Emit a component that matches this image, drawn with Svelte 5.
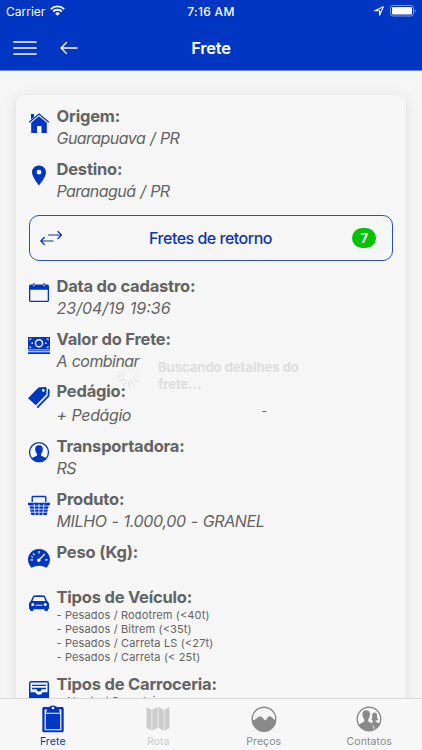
<script lang="ts">
  type Detail = {
    icon: string;
    label: string;
    value?: string;
    list?: string[];
    kind?: string;
  };

  const route: Detail[] = [
    { icon: "home", label: "Origem:", value: "Guarapuava / PR" },
    { icon: "pin", label: "Destino:", value: "Paranaguá / PR" },
  ];

  const details: Detail[] = [
    { icon: "calendar", label: "Data do cadastro:", value: "23/04/19 19:36", kind: "date" },
    { icon: "cash", label: "Valor do Frete:", value: "A combinar" },
    { icon: "tags", label: "Pedágio:", value: "+ Pedágio", kind: "toll" },
    { icon: "person", label: "Transportadora:", value: "RS" },
    { icon: "basket", label: "Produto:", value: "MILHO - 1.000,00 - GRANEL", kind: "product" },
    { icon: "gauge", label: "Peso (Kg):", kind: "empty" },
    {
      icon: "car",
      label: "Tipos de Veículo:",
      list: [
        "- Pesados / Rodotrem (<40t)",
        "- Pesados / Bitrem (<35t)",
        "- Pesados / Carreta LS (<27t)",
        "- Pesados / Carreta (< 25t)",
      ],
    },
    { icon: "tray", label: "Tipos de Carroceria:", list: ["- Aberta / Graneleiro"], kind: "body-types" },
  ];

  const tabs = [
    { icon: "clipboard", label: "Frete", state: "active" },
    { icon: "map", label: "Rota", state: "disabled" },
    { icon: "chart", label: "Preços", state: "" },
    { icon: "contacts", label: "Contatos", state: "" },
  ];

  const spokes = Array.from({ length: 12 }, (_, i) => i * 30);
</script>

{#snippet detailIcon(name: string)}
  <svg class="icon" viewBox="0 0 22 22" fill="currentColor">
    {#if name === "home"}
      <path d="M3 3h3v3L3 8.500z" />
      <path d="M1.200 11.200 11 3l9.800 8.200" fill="none" stroke="currentColor" stroke-width="1.300" />
      <path d="M11 5.200 18.800 11.800V22h-5.300v-7H9v7H3.200V11.800z" />
    {:else if name === "pin"}
      <path fill-rule="evenodd" d="M11 1.500C7 1.500 4 4.500 4 8.300 4 13.300 11 21.500 11 21.500s7-8.200 7-13.200c0-3.800-3-6.800-7-6.800zm0 4.300a2.400 2.400 0 1 1 0 4.800 2.400 2.400 0 0 1 0-4.800z" />
    {:else if name === "calendar"}
      <path fill-rule="evenodd" d="M2.500 3.500H5v1.200c0 .8 1.600.8 1.600 0V3.500h8.800v1.200c0 .8 1.600.8 1.600 0V3.500h2.500A1.500 1.500 0 0 1 21 5v14.500a1.500 1.500 0 0 1-1.500 1.500h-17A1.500 1.500 0 0 1 1 19.500V5a1.500 1.500 0 0 1 1.500-1.500zm-.2 5.300v10.900h17.400V8.800z" />
      <path d="M5.200 2h1.200v2.500H5.200zM15.600 2h1.200v2.500h-1.200z" />
    {:else if name === "cash"}
      <path d="M0 3h22v12.500H0z" />
      <circle cx="11" cy="9.200" r="3.500" fill="none" stroke="#f6f6f6" stroke-width="1.400" />
      <path d="M1.500 4.500h2.300L1.500 6.800zM20.500 4.500h-2.300l2.300 2.300zM1.500 14h2.300l-2.300-2.300zM20.500 14h-2.300l2.300-2.300zM3.500 8.500H5V10H3.500zM17 8.500h1.500V10H17z" fill="#f6f6f6" />
      <path d="M0 16.300h22v1H0zM0 18.300h22v1.700H0z" />
    {:else if name === "tags"}
      <path fill-rule="evenodd" d="M0 12.300 10.500 1.500l6.700-.5c.8 0 1.500.7 1.500 1.500l-.4 6L7.800 19.300zM15.300 3a1.400 1.400 0 1 0 0 2.800 1.400 1.400 0 0 0 0-2.800z" />
      <path d="M20 2.800c1 .4 1.700 1 1.700 2l-.4 5.700L9.800 22.300l-1.200-1.200L19.600 9.500z" />
    {:else if name === "person"}
      <circle cx="11" cy="11.200" r="9.500" fill="none" stroke="currentColor" stroke-width="1.300" />
      <path d="M11 4.200c-2.800 0-4 1.900-3.800 4.500.2 1.900.9 3 1.700 4v2L3.700 17c4 5 10.600 5 14.600 0l-5.200-2.300v-2c.8-1 1.500-2.100 1.700-4 .2-2.600-1-4.500-3.800-4.500z" />
    {:else if name === "basket"}
      <path d="M4.200 8V3.300c0-.6.300-.8.800-.8h12c.5 0 .8.200.8.800V8" fill="none" stroke="currentColor" stroke-width="1.400" />
      <path d="M0 8.700h22v2.300h-1.200L18.700 21H3.300L1.200 11H0z" />
      <path d="M1 12h20M2 15.200h18M3 18.200h16M6 9.800l1.200 11.500M11 9.800v11.500M16 9.800l-1.200 11.500" stroke="#f6f6f6" stroke-width=".8" />
    {:else if name === "gauge"}
      <path d="M11 2C4.900 2 0 6.700 0 12.500c0 3 1.200 5.800 3.500 8.300 4.500-2.900 10.500-2.900 15 0 2.300-2.500 3.500-5.300 3.500-8.300C22 6.700 17.100 2 11 2z" />
      <path d="M11 4v2.400M5 6.500l1.600 1.600M2.500 12.800h2.600M17 12.800h2.600M3.300 9.500l1.700.7M11 13l5.800-6" stroke="#f6f6f6" stroke-width="1.200" />
      <circle cx="10.800" cy="13.200" r="1.700" fill="#f6f6f6" />
    {:else if name === "car"}
      <path fill-rule="evenodd" d="M5.200 3.800C6 3 16 3 16.800 3.800l2.400 5.200 1.800 2.300v5.600h-1v1.400c0 1-3.500 1-3.500 0v-1h-11v1c0 1-3.500 1-3.500 0v-1.400H1v-5.600L2.800 9zm1 1.100L4.500 9h13l-1.700-4.100zM4.800 10.900a1.500 1.500 0 1 0 0 3 1.500 1.500 0 0 0 0-3zm12.400 0a1.500 1.500 0 1 0 0 3 1.500 1.500 0 0 0 0-3zM7.500 12.700v1h7v-1z" />
    {:else if name === "tray"}
      <path fill-rule="evenodd" d="M3 2h16a2 2 0 0 1 2 2v18H1V4a2 2 0 0 1 2-2zm-.5 1.500v9.800h5c.3 1.500 1.500 2.500 3.500 2.500s3.200-1 3.500-2.500h5V3.500z" />
      <path d="M4 5.800h14v1.200H4zM4 8.800h14v1.400h-4.600c0 3-4.800 3-4.800 0H4z" />
    {/if}
  </svg>
{/snippet}

{#snippet tabIcon(name: string)}
  <svg class="tab-icon" viewBox="0 0 28 28" fill="currentColor">
    {#if name === "clipboard"}
      <path fill-rule="evenodd" d="M4.800 2H10c.7-.2 1.200-1.600 4-1.600S17.300 1.800 18 2h5.200c.9 0 1.500.6 1.500 1.500v22.300c0 .9-.6 1.500-1.500 1.500H4.800c-.9 0-1.500-.6-1.500-1.500V3.500C3.300 2.600 3.900 2 4.800 2zm.8 2.500v20.800h16.800V4.500h-2.600L21 7.700H7l1.200-3.200zM14 1.700a1.300 1.300 0 1 0 0 2.600 1.300 1.300 0 0 0 0-2.600z" />
      <path d="M6.800 8.800h14.400v15.400H6.800z" />
    {:else if name === "map"}
      <path d="m2.500 2 5 2.700v21.100l-5-3zM8.300 4.700 13.600 2v20.800l-5.300 3zM14.400 2l5.300 2.700v21.100l-5.300-3zM20.500 4.700l5-2.700v20.800l-5 3z" />
    {:else if name === "chart"}
      <circle cx="14" cy="14" r="11.800" fill="none" stroke="currentColor" stroke-width="1.400" />
      <path d="M2 15c2.500 0 3.500-.5 5.200-2.200C8.700 11.200 10 10.800 11.800 12c1.500 1 2.200 3.300 3.500 3.300s2-3.500 4.200-4c2.400-.4 3.500 3.700 6.500 3.700A12 12 0 0 1 2 15z" />
    {:else}
      <circle cx="14" cy="14" r="11.800" fill="none" stroke="currentColor" stroke-width="1.400" />
      <path d="M19.200 7.500c2.300 0 3.100 1.700 2.900 3.500-.1 1.700.3 2.700 1.200 3.700-1 .7-2.200.9-2.800.9v1.200l4 1.600c-1 3.200-3 5.200-5 6.200-.3-3-.8-4.800-3.600-5.800l1.800-1.900v-1.300c-.6-.2-1-.4-1.300-.9 1-1.700.9-3.300.8-5 .3-1.400 1-2 2-2z" />
      <path d="M11.200 5.300c2.900 0 4 2 3.700 4.600-.1 1.800-.8 3.300-1.700 4.300v2.300c2.800 1.700 5.300 1.900 5.300 8.500-5 2.200-12 .6-14.500-5.500l5.200-3v-2.300c-.9-1-1.600-2.500-1.700-4.300-.3-2.600.8-4.600 3.700-4.600z" />
    {/if}
  </svg>
{/snippet}

{#snippet detailRow(row: Detail)}
  <div class="row {row.kind ?? ''}">
    {@render detailIcon(row.icon)}
    <div class="row-text">
      <h2>{row.label}</h2>
      {#if row.value}
        <p class="value">{row.value}</p>
      {/if}
      {#if row.list}
        <ul>
          {#each row.list as item}
            <li>{item}</li>
          {/each}
        </ul>
      {/if}
    </div>
    {#if row.kind === "toll"}
      <span class="toll-note">-</span>
    {/if}
  </div>
{/snippet}

<div class="screen">
  <header>
    <div class="status">
      <div class="carrier">
        <span>Carrier</span>
        <svg class="wifi" viewBox="0 0 15 11" fill="none" stroke="#fff" stroke-width="1.900">
          <path d="M.9 4.100a9.400 9.400 0 0 1 13.200 0M3.200 6.500a6.100 6.100 0 0 1 8.600 0" />
          <path d="M7.500 10.800 5.200 8.400a3.300 3.300 0 0 1 4.600 0z" fill="#fff" stroke="none" />
        </svg>
      </div>
      <span class="clock">7:16 AM</span>
      <div class="indicators">
        <svg class="location" viewBox="0 0 10 10" fill="none" stroke="#fff" stroke-width="1.100">
          <path d="M9.300.7 5.600 9.200V4.700H.7z" stroke-linejoin="round" />
        </svg>
        <svg class="battery" viewBox="0 0 26 12">
          <rect x=".5" y=".5" width="23" height="10.500" rx="2.600" fill="none" stroke="#7f9be2" />
          <rect x="2" y="2" width="20" height="7.500" rx="1.300" fill="#fff" />
          <path d="M24.700 4v3.800c1.200-.5 1.200-3.300 0-3.800z" fill="#7f9be2" />
        </svg>
      </div>
    </div>
    <div class="navbar">
      <div class="actions">
        <svg class="menu" viewBox="0 0 24 16" stroke="#fff" stroke-width="1.700" stroke-linecap="round">
          <path d="M1 2h22M1 8h22M1 14h22" />
        </svg>
        <svg class="back" viewBox="0 0 18 14" fill="none" stroke="#fff" stroke-width="1.400" stroke-linecap="round" stroke-linejoin="round">
          <path d="M17 7H1M6.500 1.500 1 7l5.500 5.500" />
        </svg>
      </div>
      <h1>Frete</h1>
    </div>
  </header>

  <main>
    <section class="card">
      {#each route as row}
        {@render detailRow(row)}
      {/each}

      <button type="button" class="return-button">
        <svg viewBox="0 0 22 16" fill="none" stroke="currentColor" stroke-width="1.200" stroke-linecap="round" stroke-linejoin="round">
          <path d="M8.500 5h13M18 1.500 21.500 5 18 8.500M13 11H.8M4.300 7.500.8 11l3.500 3.500" />
        </svg>
        <span>Fretes de retorno</span>
        <strong>7</strong>
      </button>

      {#each details as row}
        {@render detailRow(row)}
      {/each}
    </section>
  </main>

  <nav>
    {#each tabs as tab}
      <div class="tab {tab.state}">
        {@render tabIcon(tab.icon)}
        <span>{tab.label}</span>
      </div>
    {/each}
  </nav>

  <div class="loading">
    <svg viewBox="0 0 28 28">
      {#each spokes as angle, i}
        <path
          d="M14 3v5.500"
          transform="rotate({angle} 14 14)"
          stroke="#dedede"
          stroke-width="1.500"
          stroke-linecap="round"
          opacity={i > 3 && i < 10 ? 0.7 : 0.25}
        />
      {/each}
    </svg>
    <p>Buscando detalhes do<br />frete...</p>
  </div>
</div>

<style>
  :global(body) {
    margin: 0;
  }

  .screen {
    position: relative;
    display: flex;
    flex-direction: column;
    width: 422px;
    height: 750px;
    overflow: hidden;
    background: #f6f6f6;
    color: #636363;
    font-family: Inter, "Liberation Sans", sans-serif;
  }

  h1,
  h2,
  p,
  ul {
    margin: 0;
    padding: 0;
  }

  svg {
    display: block;
    flex: none;
  }

  header {
    flex: none;
    box-sizing: border-box;
    height: 71px;
    border-bottom: 1px solid #6d88cd;
    background: #0036c1;
    color: #fff;
  }

  .status {
    display: grid;
    grid-template-columns: 1fr auto 1fr;
    align-items: center;
    height: 22px;
    padding: 0 6px;
    font-size: 12px;
  }

  .carrier,
  .indicators {
    display: flex;
    align-items: center;
    gap: 5px;
  }

  .wifi {
    width: 15px;
    height: 11px;
    margin-top: -1px;
  }

  .clock {
    font-weight: 500;
    letter-spacing: 0.3px;
  }

  .indicators {
    justify-content: flex-end;
    gap: 6px;
  }

  .location {
    width: 10px;
    height: 10px;
  }

  .battery {
    width: 26px;
    height: 12px;
  }

  .navbar {
    display: grid;
    grid-template-columns: 1fr auto 1fr;
    align-items: center;
    box-sizing: border-box;
    height: 48px;
    padding: 4px 13px 0;
  }

  .actions {
    display: flex;
    align-items: center;
    gap: 23px;
  }

  .menu {
    width: 24px;
    height: 16px;
  }

  .back {
    width: 18px;
    height: 14px;
  }

  h1 {
    font-size: 16.5px;
    font-weight: 600;
    letter-spacing: -0.25px;
  }

  main {
    flex: 1;
    min-height: 0;
    overflow: hidden;
    padding: 24px 16px 0;
  }

  .card {
    box-sizing: border-box;
    height: 700px;
    padding: 10px 13px;
    border-radius: 8px;
    background: #f6f6f6;
    box-shadow: 0 2px 14px rgba(0, 0, 0, 0.11);
  }

  .row {
    display: flex;
    gap: 6.5px;
    min-height: 44px;
    margin-bottom: 8.8px;
  }

  .icon {
    width: 22px;
    height: 22px;
    margin: 6px 0 0 -1px;
    color: #0036c1;
  }

  h2 {
    font-size: 16.5px;
    font-weight: 700;
    line-height: 22px;
    letter-spacing: -0.2px;
    white-space: nowrap;
  }

  .value {
    font-size: 16px;
    font-style: italic;
    line-height: 22px;
    letter-spacing: -0.55px;
    word-spacing: 0.8px;
    white-space: nowrap;
  }

  .date .value {
    letter-spacing: 0;
  }

  .product .value {
    letter-spacing: -0.35px;
  }

  .toll .value {
    padding-top: 2px;
    letter-spacing: -0.4px;
  }

  .toll-note {
    margin: 20px 0 0 124px;
    font-size: 12px;
    line-height: 22px;
  }

  .empty {
    min-height: 36px;
  }

  ul {
    list-style: none;
    font-size: 11px;
    line-height: 14.25px;
    letter-spacing: 0.14px;
  }

  .body-types ul {
    line-height: 12px;
  }

  .return-button {
    display: grid;
    grid-template-columns: 1fr auto 1fr;
    align-items: center;
    box-sizing: border-box;
    width: 364px;
    height: 46px;
    margin: 13px 0 14px;
    padding: 0 16px 0 10px;
    border: 1px solid #2b50b8;
    border-radius: 10px;
    background: transparent;
    color: #0a36b0;
    font: 500 16px Inter, sans-serif;
    letter-spacing: -0.5px;
  }

  .return-button svg {
    width: 22px;
    height: 16px;
  }

  .return-button strong {
    justify-self: end;
    width: 24px;
    border-radius: 10px;
    background: #00c400;
    color: #fff;
    font-size: 13px;
    font-weight: 700;
    line-height: 20px;
    text-align: center;
  }

  .return-button span {
    padding-left: 5px;
  }

  nav {
    position: relative;
    flex: none;
    display: grid;
    grid-template-columns: repeat(4, 1fr);
    box-sizing: border-box;
    height: 52px;
    border-top: 1px solid #d9d9d9;
    background: #f7f7f7;
    color: #8a8a8a;
  }

  .tab {
    display: flex;
    flex-direction: column;
    align-items: center;
    padding-top: 6px;
    font-size: 10.5px;
    line-height: 14px;
    letter-spacing: 0.1px;
  }

  .tab-icon {
    width: 28px;
    height: 28px;
    margin-bottom: 2px;
  }

  .tab.active {
    color: #0036c1;
  }

  .tab.disabled {
    color: #cccccc;
  }

  .loading {
    position: absolute;
    top: 359px;
    left: 115px;
    display: flex;
    align-items: center;
    gap: 15px;
    color: #dedede;
    font-size: 13px;
    font-weight: 700;
    line-height: 17px;
  }

  .loading svg {
    width: 28px;
    height: 28px;
  }
</style>
